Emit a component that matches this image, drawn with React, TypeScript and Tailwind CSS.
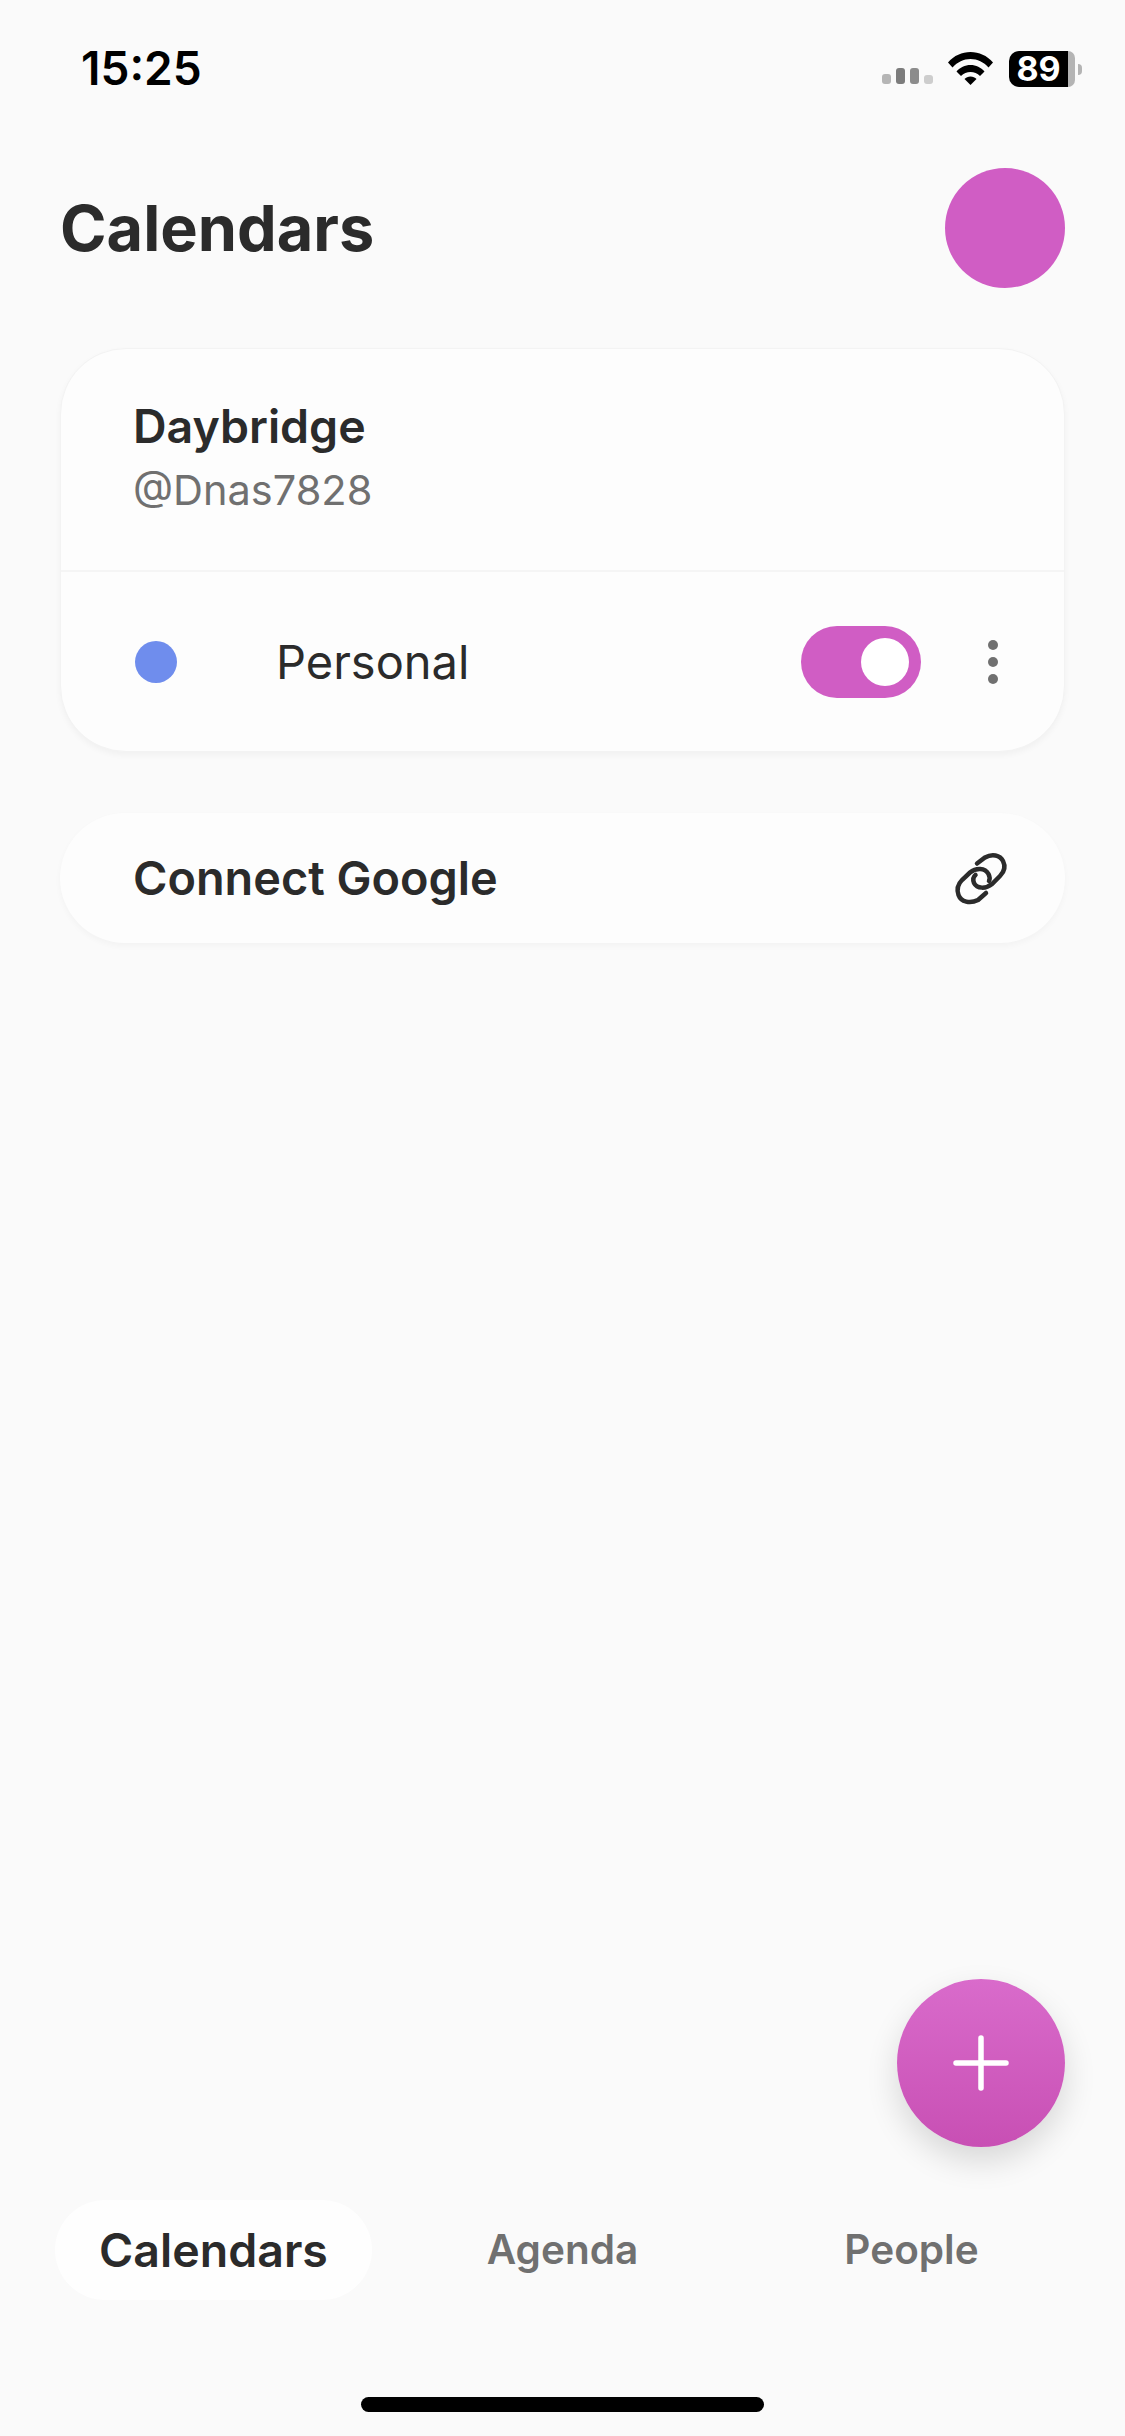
export default function App() {
  return (
    <div className="w-[1125px] h-[2436px] bg-[#fafafa] flex flex-col text-[#2b2b2b] font-['Inter',sans-serif] overflow-hidden">
      {/* Status bar */}
      <div className="h-[168px] pt-[40px] pl-[81px] pr-[43px] flex items-start justify-between">
        <span className="text-[46px] leading-[56px] font-semibold text-black">15:25</span>
        <div className="flex items-start">
          <div className="mt-[28px] flex items-end gap-[5px] h-[16px]">
            <div className="w-[9px] h-[10px] rounded-[3px] bg-[#b5b5b5]" />
            <div className="w-[9px] h-[16px] rounded-[3px] bg-[#7c7c7c]" />
            <div className="w-[9px] h-[16px] rounded-[3px] bg-[#8c8c8c]" />
            <div className="w-[9px] h-[9px] rounded-[3px] bg-[#cdcdcd]" />
          </div>
          <svg className="mt-[11px] ml-[15px]" width="45" height="34" viewBox="0 0 45 34">
            <path d="M0 11.500C6 4.500 14 1 22.500 1S39 4.500 45 11.500L40.500 16.500C35.500 11 29.500 8 22.500 8S9.500 11 4.500 16.500Z" fill="#000" />
            <path d="M8.500 20.500C12 16.500 17 14 22.500 14S33 16.500 36.500 20.500L32 25C29.500 22.500 26 21 22.500 21S15.500 22.500 13 25Z" fill="#000" />
            <path d="M16.500 28C18 26.500 20 25.500 22.500 25.500S27 26.500 28.500 28L22.500 34Z" fill="#000" />
          </svg>
          <div className="ml-[16px] mt-[11px] flex items-center">
            <div className="w-[59px] h-[36px] rounded-l-[10px] bg-black flex items-center justify-center text-white text-[34px] leading-[36px] font-bold">
              89
            </div>
            <div className="w-[7px] h-[36px] rounded-r-[10px] bg-[#b4b4b4]" />
            <div className="ml-[3px] w-[4px] h-[11px] rounded-r-[4px] bg-[#b4b4b4]" />
          </div>
        </div>
      </div>

      {/* Header */}
      <div className="h-[120px] pl-[60px] pr-[60px] flex items-center justify-between">
        <h1 className="text-[63px] leading-[78px] font-bold">Calendars</h1>
        <div className="w-[120px] h-[120px] rounded-full bg-[#d05dc4]" />
      </div>

      {/* Account card */}
      <div className="mt-[60px] mx-[60px] h-[404px] rounded-[66px] bg-[#fdfdfd] border border-[#f3f3f3] shadow-[0_3px_6px_rgba(0,0,0,0.04)] flex flex-col">
        <div className="h-[223px] pl-[72px] pt-[47px] border-b-2 border-[#f5f5f5]">
          <div className="text-[46.500px] leading-[60px] font-semibold">Daybridge</div>
          <div className="mt-[4px] text-[41.500px] leading-[60px] text-[#707070]">@Dnas7828</div>
        </div>
        <div className="flex-1 pl-[74px] pr-[66px] flex items-center">
          <div className="w-[42px] h-[42px] rounded-full bg-[#6f8ded]" />
          <span className="ml-[99px] text-[47px] leading-[60px] flex-1">Personal</span>
          <div className="w-[120px] h-[72px] rounded-full bg-[#d05dc4] flex items-center justify-end pr-[12px]">
            <div className="w-[48px] h-[48px] rounded-full bg-white" />
          </div>
          <div className="ml-[67px] w-[10px] flex flex-col gap-[7px]">
            <div className="w-[10px] h-[10px] rounded-full bg-[#707070]" />
            <div className="w-[10px] h-[10px] rounded-full bg-[#707070]" />
            <div className="w-[10px] h-[10px] rounded-full bg-[#707070]" />
          </div>
        </div>
      </div>

      {/* Connect Google */}
      <div className="mt-[61px] mx-[60px] h-[130px] rounded-[65px] bg-[#fdfdfd] shadow-[0_3px_6px_rgba(0,0,0,0.03)] pl-[73px] pr-[53px] flex items-center justify-between">
        <span className="text-[46.800px] leading-[60px] font-semibold">Connect Google</span>
        <svg width="62" height="62" viewBox="0 0 62 62" fill="none" stroke="#2b2b2b" strokeWidth="4.500" strokeLinecap="round">
          <path d="M27 16.500L35 10.500C42 6.500 50 8 53 14C56 20 54 25 50 29L42 37C36 42 27 42 24 36C22.500 32 23 30 25.500 28" />
          <path d="M36 46L28 53C20 57 11 55 8.500 48C6.500 42 8 37 12 33L20 25.500C26 20.500 35 20.500 38.500 27C40 30 40 32 39 34" />
        </svg>
      </div>

      <div className="flex-1" />

      {/* FAB */}
      <div className="mr-[60px] self-end w-[168px] h-[168px] rounded-full bg-gradient-to-b from-[#d96bcb] to-[#c84fb4] shadow-[0_14px_32px_rgba(0,0,0,0.14)] flex items-center justify-center">
        <svg width="60" height="60" viewBox="0 0 60 60" stroke="#fff" strokeWidth="5.500" strokeLinecap="round">
          <path d="M30 5V55M5 30H55" />
        </svg>
      </div>

      {/* Tabs */}
      <div className="mt-[53px] px-[39px] grid grid-cols-[349px_349px_349px] font-semibold text-[#707070] text-[40.500px] leading-[56px]">
        <div className="flex justify-center">
          <div className="w-[317px] h-[100px] rounded-[50px] bg-[#fefefe] flex items-center justify-center text-[#2b2b2b] text-[46.500px]">
            Calendars
          </div>
        </div>
        <div className="h-[100px] flex items-center justify-center">Agenda</div>
        <div className="h-[100px] flex items-center justify-center">People</div>
      </div>

      {/* Home indicator */}
      <div className="mt-[97px] mb-[24px] mx-auto w-[403px] h-[15px] rounded-full bg-black" />
    </div>
  );
}
